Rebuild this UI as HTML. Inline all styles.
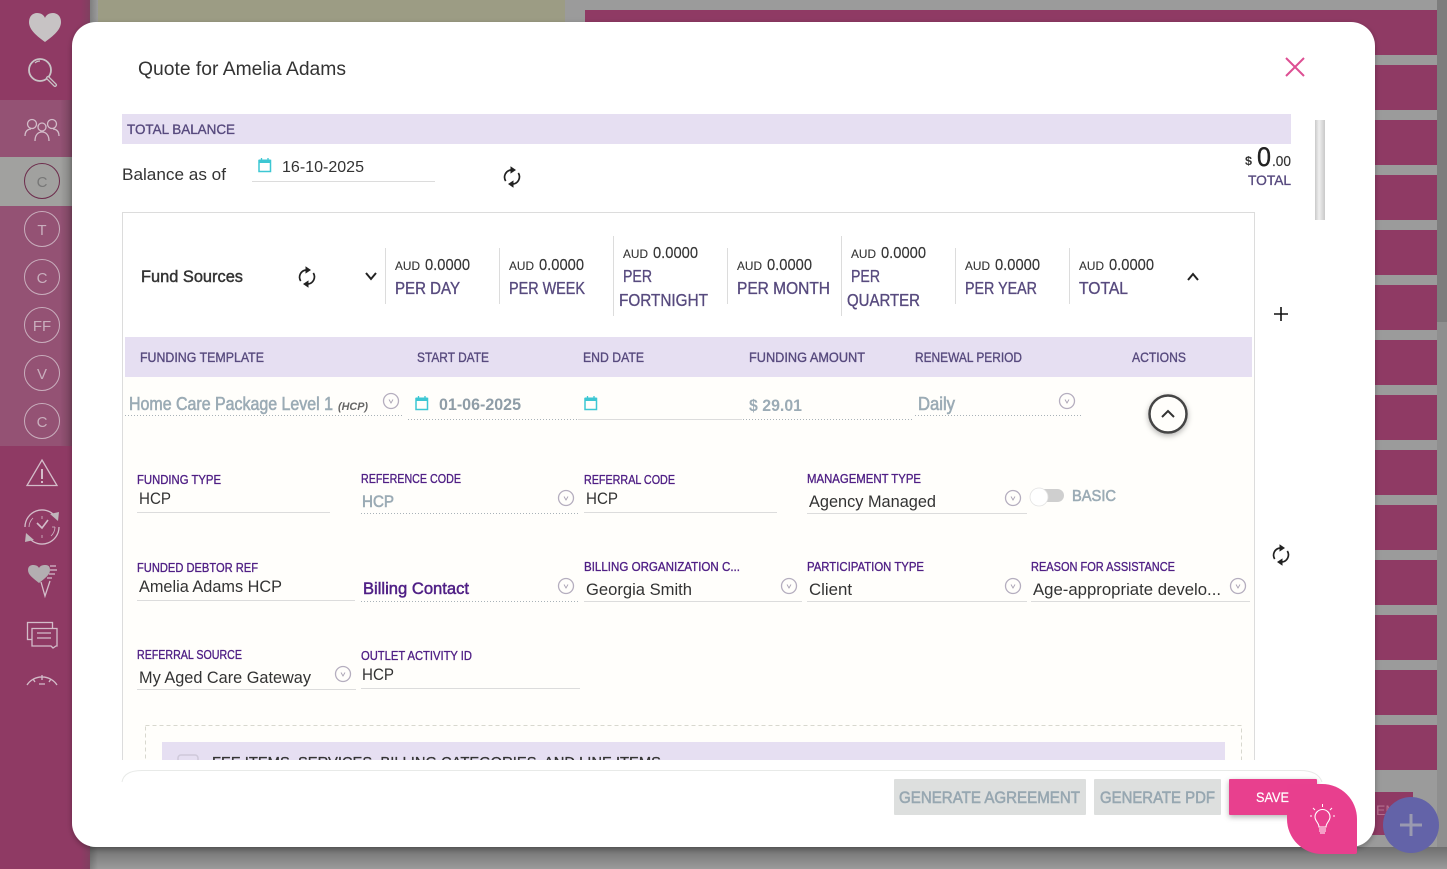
<!DOCTYPE html>
<html lang="en"><head><meta charset="utf-8"><title>Quote for Amelia Adams</title>
<style>
html,body{margin:0;padding:0;width:1447px;height:869px;overflow:hidden;background:#9b9b9b}
svg{display:block;position:absolute;left:0;top:0;overflow:hidden}
text{font-family:"Liberation Sans",sans-serif;white-space:pre}
.d{fill:#333}
.l{fill:#4f1f85;stroke:#4f1f85;stroke-width:.35;font-size:13px}
.g{fill:#9babb5;stroke:#9babb5;stroke-width:.6}
.v{fill:#333;font-size:17px}
.h{fill:#574a7e;stroke:#574a7e;stroke-width:.35;font-size:14px}
.a{fill:#333;font-size:12px;stroke:#333;stroke-width:.1}
.n{fill:#333;font-size:16px;stroke:#333;stroke-width:.15}
.t{fill:#574a7e;stroke:#574a7e;stroke-width:.35;font-size:17.5px}
.c{fill:#c9aebd;font-size:15px;text-anchor:middle}
.ln{stroke:#dcdcdc;stroke-width:1;fill:none}
.dt{stroke:#a9b2b8;stroke-width:1;stroke-dasharray:1 2;fill:none}
.si{fill:none;stroke:#d3bcc9;stroke-width:1.3}
</style></head><body>
<svg width="1447" height="869" viewBox="0 0 1447 869" xmlns="http://www.w3.org/2000/svg">
<defs>
<linearGradient id="side" x1="0" x2="1" y1="0" y2="0"><stop offset="0" stop-color="#8f3a64"/><stop offset=".9" stop-color="#8f3a64"/><stop offset="1" stop-color="#7f4060"/></linearGradient>
<linearGradient id="edge" x1="0" x2="1" y1="0" y2="0"><stop offset="0" stop-color="#000" stop-opacity="0"/><stop offset="1" stop-color="#000" stop-opacity=".18"/></linearGradient>
<linearGradient id="bot" x1="0" x2="0" y1="0" y2="1"><stop offset="0" stop-color="#6f6f6f"/><stop offset="1" stop-color="#9b9b9b"/></linearGradient>
<linearGradient id="sb" x1="0" x2="1" y1="0" y2="0"><stop offset="0" stop-color="#c9c9c9"/><stop offset=".4" stop-color="#efefef"/><stop offset="1" stop-color="#c9c9c9"/></linearGradient>
<filter id="sh" x="-20%" y="-20%" width="140%" height="150%"><feDropShadow dx="0" dy="2" stdDeviation="3" flood-color="#000" flood-opacity=".3"/></filter>
<g id="sync" fill="none" stroke="#222" stroke-width="1.7">
<path d="M-6.300 4A7.200 7.200 0 0 1 -1 -7"/><path d="M6.300 -4A7.200 7.200 0 0 1 1 7"/>
<path d="M-1.500 -10.800L4 -7L-1.500 -3.400Z" fill="#222" stroke="none"/><path d="M1.500 10.800L-4 7L1.500 3.400Z" fill="#222" stroke="none"/>
</g>
<g id="cv"><circle r="7.5" fill="none" stroke="#b5aebf" stroke-width="1.3"/><path d="M-2 -1.5L0 2L2 -1.5" fill="none" stroke="#a9a2b3" stroke-width=".9"/></g>
<g id="cal" fill="none" stroke="#3dc7d3"><rect x="1" y="2.5" width="11.5" height="11" stroke-width="1.5"/><rect x="1" y="1.5" width="11.5" height="3.5" fill="#3dc7d3" stroke="none"/><path d="M3.5 0V2M10 0V2" stroke-width="1.3"/></g>
<clipPath id="body"><rect x="72" y="22" width="1303" height="738"/></clipPath>
</defs>

<!-- page background -->
<rect width="1447" height="869" fill="#9b9b9b"/>
<rect x="98" y="0" width="467" height="22" fill="#9c9c84"/>
<g fill="#8f3a64">
<rect x="585" y="10" width="852" height="45"/><rect x="585" y="65" width="852" height="45"/><rect x="585" y="120" width="852" height="45"/><rect x="585" y="175" width="852" height="45"/><rect x="585" y="230" width="852" height="45"/><rect x="585" y="285" width="852" height="45"/><rect x="585" y="340" width="852" height="45"/><rect x="585" y="395" width="852" height="45"/><rect x="585" y="450" width="852" height="45"/><rect x="585" y="505" width="852" height="45"/><rect x="585" y="560" width="852" height="45"/><rect x="585" y="615" width="852" height="45"/><rect x="585" y="670" width="852" height="45"/><rect x="585" y="725" width="852" height="45"/>
<rect x="1370" y="792" width="43" height="43"/>
</g>
<text x="1376" y="815" font-size="14" fill="#b5708f">EM</text>
<rect x="1437" y="0" width="10" height="869" fill="#8f8f8f"/>
<rect x="1437" y="0" width="10" height="322" fill="#7d7d7d"/>

<!-- bottom shadow -->
<rect x="90" y="847" width="1357" height="22" fill="url(#bot)"/>

<!-- sidebar -->
<rect x="0" y="0" width="90" height="869" fill="url(#side)"/>
<rect x="90" y="0" width="8" height="869" fill="url(#edge)" transform="matrix(-1 0 0 1 188 0)"/>
<rect x="0" y="100" width="72" height="57" fill="#945274"/>
<rect x="0" y="157" width="72" height="49" fill="#a1a19f"/>
<rect x="0" y="206" width="72" height="240" fill="#945274"/>
<rect x="60" y="100" width="12" height="346" fill="url(#edge)"/>

<path d="M45 42C37 36 29 30 29 22C29 16 33 13 37 13C41 13 44 15 45 18C46 15 49 13 53 13C57 13 61 16 61 22C61 30 53 36 45 42Z" fill="#c7c3c4"/>
<g fill="none" stroke="#c9c3c6"><circle cx="40" cy="70" r="11" stroke-width="1.8"/><path d="M48 78L55 85" stroke-width="4" stroke-linecap="round"/><path d="M48 78L55 85" stroke="#8f3a64" stroke-width="1.4" stroke-linecap="round"/><path d="M35 63Q37 61 40 61" stroke-width="1.2"/></g>

<g class="si"><circle cx="32" cy="124" r="4.5"/><circle cx="42" cy="127" r="4"/><circle cx="52" cy="124" r="4.5"/><path d="M25 136C25 131 28 129 31 129M59 136C59 131 56 129 53 129M35 141C35 135 38 132 42 132C46 132 49 135 49 141"/></g>
<g fill="none" stroke="#c9aebd" stroke-width="1"><circle cx="42" cy="181" r="17.5" stroke="#6d2c4c"/><circle cx="42" cy="229" r="17.5"/><circle cx="42" cy="277" r="17.5"/><circle cx="42" cy="325" r="17.5"/><circle cx="42" cy="373" r="17.5"/><circle cx="42" cy="421" r="17.5"/></g>
<text class="c" x="42" y="187" style="fill:#777">C</text><text class="c" x="42" y="235">T</text><text class="c" x="42" y="283">C</text><text class="c" x="42" y="331">FF</text><text class="c" x="42" y="379">V</text><text class="c" x="42" y="427">C</text>

<g class="si"><path d="M42 460L57 485.500H27Z"/><path d="M42 469V479" stroke-width="2"/><path d="M42 481V483" stroke-width="2"/></g>
<g class="si"><path d="M25 527A17 17 0 0 1 55 516M59 527A17 17 0 0 1 29 538"/><path d="M29 527A13 13 0 0 1 33 518M55 527A13 13 0 0 1 51 536" stroke-width=".8"/><path d="M42 516V519M42 535V538M52 527H55" stroke-width=".8"/><path d="M37 523L42 528L48 520" stroke-width="1.6"/></g>
<path d="M50 514L59 512L58 521Z" fill="#c0b6bb"/><path d="M34 540L25 542L26 533Z" fill="#c0b6bb"/>
<path d="M39 583C33 578 28 575 28 570C28 566 31 565 33 565C36 565 38 566 39 568C40 566 42 565 45 565C48 565 50 566 50 570C50 575 45 578 39 583Z" fill="#b3aeb1"/>
<g class="si" stroke-width="1.1"><path d="M50 566H56M50 570H57M49 574H55M47 578H52M41 582L45 596L50 581"/></g>
<g class="si"><rect x="27.500" y="622.500" width="25" height="17"/><path d="M32 628.500H57V646H56L53 648L51 646H32Z" fill="#8f3a64"/><path d="M37 633H51M37 638H51"/></g>
<g class="si"><path d="M27 685A18 18 0 0 1 57 685M42 675V680M33 679L35 682M51 679L49 682M39 684H45"/></g>

<!-- modal -->
<rect x="72" y="22" width="1303" height="825" rx="24" fill="#fff" filter="url(#sh)"/>

<text class="d" x="138" y="75" font-size="19" textLength="208" lengthAdjust="spacingAndGlyphs">Quote for Amelia Adams</text>
<path d="M1286 58L1304 76M1304 58L1286 76" stroke="#dd4f93" stroke-width="2" fill="none"/>

<rect x="122" y="114" width="1169" height="30" fill="#e6dff2"/>
<text class="h" x="127" y="134" textLength="108" lengthAdjust="spacingAndGlyphs">TOTAL BALANCE</text>
<text class="d" x="122" y="180" font-size="17" textLength="104" lengthAdjust="spacingAndGlyphs">Balance as of</text>
<use href="#cal" x="258" y="158"/>
<text class="d" x="282" y="172" font-size="16" textLength="82" lengthAdjust="spacingAndGlyphs">16-10-2025</text>
<path class="ln" d="M252 181.500H435"/>
<use href="#sync" x="512" y="177"/>

<text x="1245" y="165" font-size="12" font-weight="bold" fill="#333" textLength="7" lengthAdjust="spacingAndGlyphs">$</text>
<text x="1257" y="166" font-size="27" fill="#222" stroke="#222" stroke-width=".4" textLength="14" lengthAdjust="spacingAndGlyphs">0</text>
<text x="1272" y="166" font-size="15" fill="#333" stroke="#333" stroke-width=".15" textLength="19" lengthAdjust="spacingAndGlyphs">.00</text>
<text class="h" x="1248" y="185" textLength="43" lengthAdjust="spacingAndGlyphs">TOTAL</text>
<rect x="1315" y="120" width="10" height="100" fill="url(#sb)"/>

<g clip-path="url(#body)">
<rect x="122.500" y="212.500" width="1132" height="656" fill="#fff" stroke="#dcdcdc"/>
<rect x="123" y="377" width="1131" height="491" fill="#fffefb"/>

<text x="141" y="282" font-size="17" fill="#333" stroke="#333" stroke-width=".45" textLength="102" lengthAdjust="spacingAndGlyphs">Fund Sources</text>
<use href="#sync" x="307" y="277"/>
<path d="M366 273L371 279L376 273" fill="none" stroke="#222" stroke-width="2"/>
<path d="M1188 280L1193 274L1198 280" fill="none" stroke="#222" stroke-width="2"/>
<g class="ln"><path d="M385.500 248V304M499.500 248V304M613.500 236V316M727.500 248V304M841.500 236V316M955.500 248V304M1069.500 248V304"/></g>

<text class="a" x="395" y="270" textLength="25" lengthAdjust="spacingAndGlyphs">AUD</text><text class="n" x="425" y="270" textLength="45" lengthAdjust="spacingAndGlyphs">0.0000</text>
<text class="t" x="395" y="294" textLength="65" lengthAdjust="spacingAndGlyphs">PER DAY</text>
<text class="a" x="509" y="270" textLength="25" lengthAdjust="spacingAndGlyphs">AUD</text><text class="n" x="539" y="270" textLength="45" lengthAdjust="spacingAndGlyphs">0.0000</text>
<text class="t" x="509" y="294" textLength="76" lengthAdjust="spacingAndGlyphs">PER WEEK</text>
<text class="a" x="623" y="258" textLength="25" lengthAdjust="spacingAndGlyphs">AUD</text><text class="n" x="653" y="258" textLength="45" lengthAdjust="spacingAndGlyphs">0.0000</text>
<text class="t" x="623" y="282" textLength="29" lengthAdjust="spacingAndGlyphs">PER</text>
<text class="t" x="619" y="306" textLength="89" lengthAdjust="spacingAndGlyphs">FORTNIGHT</text>
<text class="a" x="737" y="270" textLength="25" lengthAdjust="spacingAndGlyphs">AUD</text><text class="n" x="767" y="270" textLength="45" lengthAdjust="spacingAndGlyphs">0.0000</text>
<text class="t" x="737" y="294" textLength="93" lengthAdjust="spacingAndGlyphs">PER MONTH</text>
<text class="a" x="851" y="258" textLength="25" lengthAdjust="spacingAndGlyphs">AUD</text><text class="n" x="881" y="258" textLength="45" lengthAdjust="spacingAndGlyphs">0.0000</text>
<text class="t" x="851" y="282" textLength="29" lengthAdjust="spacingAndGlyphs">PER</text>
<text class="t" x="847" y="306" textLength="73" lengthAdjust="spacingAndGlyphs">QUARTER</text>
<text class="a" x="965" y="270" textLength="25" lengthAdjust="spacingAndGlyphs">AUD</text><text class="n" x="995" y="270" textLength="45" lengthAdjust="spacingAndGlyphs">0.0000</text>
<text class="t" x="965" y="294" textLength="72" lengthAdjust="spacingAndGlyphs">PER YEAR</text>
<text class="a" x="1079" y="270" textLength="25" lengthAdjust="spacingAndGlyphs">AUD</text><text class="n" x="1109" y="270" textLength="45" lengthAdjust="spacingAndGlyphs">0.0000</text>
<text class="t" x="1079" y="294" textLength="49" lengthAdjust="spacingAndGlyphs">TOTAL</text>

<rect x="125" y="337" width="1127" height="40" fill="#e6dff2"/>
<text class="h" x="140" y="362" textLength="124" lengthAdjust="spacingAndGlyphs">FUNDING TEMPLATE</text>
<text class="h" x="417" y="362" textLength="72" lengthAdjust="spacingAndGlyphs">START DATE</text>
<text class="h" x="583" y="362" textLength="61" lengthAdjust="spacingAndGlyphs">END DATE</text>
<text class="h" x="749" y="362" textLength="116" lengthAdjust="spacingAndGlyphs">FUNDING AMOUNT</text>
<text class="h" x="915" y="362" textLength="107" lengthAdjust="spacingAndGlyphs">RENEWAL PERIOD</text>
<text class="h" x="1132" y="362" textLength="54" lengthAdjust="spacingAndGlyphs">ACTIONS</text>

<text class="g" x="129" y="410" font-size="18" textLength="204" lengthAdjust="spacingAndGlyphs">Home Care Package Level 1</text>
<text x="338" y="410" font-size="11" font-style="italic" font-weight="bold" fill="#666" textLength="30" lengthAdjust="spacingAndGlyphs">(HCP)</text>
<use href="#cv" x="391" y="401"/>
<path class="dt" d="M125 415.500H403"/>
<use href="#cal" x="415" y="396"/>
<text x="439" y="410" font-size="17" font-weight="bold" fill="#8f9da7" textLength="82" lengthAdjust="spacingAndGlyphs">01-06-2025</text>
<path class="dt" d="M408 419.500H577"/>
<use href="#cal" x="584" y="396"/>
<path class="ln" d="M578 419.500H742"/>
<text x="749" y="411" font-size="17" font-weight="bold" fill="#9babb5" textLength="53" lengthAdjust="spacingAndGlyphs">$ 29.01</text>
<path class="dt" d="M743 419.500H912"/>
<text class="g" x="918" y="410" font-size="18" textLength="37" lengthAdjust="spacingAndGlyphs">Daily</text>
<use href="#cv" x="1067" y="401"/>
<path class="dt" d="M915 415.500H1082"/>
<circle cx="1168" cy="414" r="18.500" fill="#fffefb" stroke="#444" stroke-width="2.500" filter="url(#sh)"/>
<path d="M1162 417L1168 411L1174 417" fill="none" stroke="#333" stroke-width="2"/>

<text class="l" x="137" y="484" textLength="84" lengthAdjust="spacingAndGlyphs">FUNDING TYPE</text>
<text class="v" x="139" y="504" textLength="32" lengthAdjust="spacingAndGlyphs">HCP</text>
<path class="ln" d="M137 512.500H330"/>
<text class="l" x="361" y="483" textLength="100" lengthAdjust="spacingAndGlyphs">REFERENCE CODE</text>
<text class="g" x="362" y="507" font-size="17" textLength="32" lengthAdjust="spacingAndGlyphs">HCP</text>
<use href="#cv" x="566" y="498"/>
<path class="dt" d="M361 513.500H580"/>
<text class="l" x="584" y="484" textLength="91" lengthAdjust="spacingAndGlyphs">REFERRAL CODE</text>
<text class="v" x="586" y="504" textLength="32" lengthAdjust="spacingAndGlyphs">HCP</text>
<path class="ln" d="M584 512.500H777"/>
<text class="l" x="807" y="483" textLength="114" lengthAdjust="spacingAndGlyphs">MANAGEMENT TYPE</text>
<text class="v" x="809" y="507" textLength="127" lengthAdjust="spacingAndGlyphs">Agency Managed</text>
<use href="#cv" x="1013" y="498"/>
<path class="ln" d="M807 513.500H1027"/>
<rect x="1035" y="489" width="29" height="13" rx="6.500" fill="#cfcfcf"/>
<circle cx="1039" cy="497" r="9" fill="#fff" stroke="#e2e2e2" stroke-width=".8"/>
<text class="g" x="1072" y="501" font-size="16" textLength="44" lengthAdjust="spacingAndGlyphs">BASIC</text>

<text class="l" x="137" y="572" textLength="121" lengthAdjust="spacingAndGlyphs">FUNDED DEBTOR REF</text>
<text class="v" x="139" y="592" textLength="143" lengthAdjust="spacingAndGlyphs">Amelia Adams HCP</text>
<path class="ln" d="M137 600.500H355"/>
<text x="363" y="594" font-size="17" fill="#4f1f85" stroke="#4f1f85" stroke-width=".5" textLength="106" lengthAdjust="spacingAndGlyphs">Billing Contact</text>
<use href="#cv" x="566" y="586"/>
<path class="dt" d="M361 601.500H580"/>
<text class="l" x="584" y="571" textLength="156" lengthAdjust="spacingAndGlyphs">BILLING ORGANIZATION C...</text>
<text class="v" x="586" y="595" textLength="106" lengthAdjust="spacingAndGlyphs">Georgia Smith</text>
<use href="#cv" x="789" y="586"/>
<path class="ln" d="M584 601.500H802"/>
<text class="l" x="807" y="571" textLength="117" lengthAdjust="spacingAndGlyphs">PARTICIPATION TYPE</text>
<text class="v" x="809" y="595" textLength="43" lengthAdjust="spacingAndGlyphs">Client</text>
<use href="#cv" x="1013" y="586"/>
<path class="ln" d="M807 601.500H1027"/>
<text class="l" x="1031" y="571" textLength="144" lengthAdjust="spacingAndGlyphs">REASON FOR ASSISTANCE</text>
<text class="v" x="1033" y="595" textLength="188" lengthAdjust="spacingAndGlyphs">Age-appropriate develo...</text>
<use href="#cv" x="1238" y="586"/>
<path class="ln" d="M1031 601.500H1250"/>

<text class="l" x="137" y="659" textLength="105" lengthAdjust="spacingAndGlyphs">REFERRAL SOURCE</text>
<text class="v" x="139" y="683" textLength="172" lengthAdjust="spacingAndGlyphs">My Aged Care Gateway</text>
<use href="#cv" x="343" y="674"/>
<path class="ln" d="M137 689.500H356"/>
<text class="l" x="361" y="660" textLength="111" lengthAdjust="spacingAndGlyphs">OUTLET ACTIVITY ID</text>
<text class="v" x="362" y="680" textLength="32" lengthAdjust="spacingAndGlyphs">HCP</text>
<path class="ln" d="M361 688.500H580"/>

<rect x="145.500" y="725.500" width="1096" height="100" fill="none" stroke="#d8d8cf" stroke-dasharray="4 3"/>
<rect x="162" y="742" width="1063" height="60" fill="#e6dff2"/>
<rect x="178" y="755" width="20" height="20" rx="3" fill="none" stroke="#cfc9da" stroke-width="1.500"/>
<text x="212" y="767" font-size="15" fill="#333" stroke="#333" stroke-width=".3" textLength="449" lengthAdjust="spacingAndGlyphs">FEE ITEMS, SERVICES, BILLING CATEGORIES, AND LINE ITEMS</text>
</g>

<use href="#sync" x="1281" y="555"/>
<path d="M1281 307V321M1274 314H1288" stroke="#111" stroke-width="1.600" fill="none"/>

<!-- footer -->
<path d="M122 782Q124 770.500 142 770.500H1300Q1318 770.500 1322 782" fill="none" stroke="#e8eae8"/>
<rect x="894" y="779" width="192" height="36" rx="1" fill="#dddfde"/>
<text x="899" y="803" font-size="17" fill="#97a7b1" stroke="#97a7b1" stroke-width=".6" textLength="181" lengthAdjust="spacingAndGlyphs">GENERATE AGREEMENT</text>
<rect x="1094" y="779" width="127" height="36" rx="1" fill="#dddfde"/>
<text x="1100" y="803" font-size="17" fill="#97a7b1" stroke="#97a7b1" stroke-width=".6" textLength="115" lengthAdjust="spacingAndGlyphs">GENERATE PDF</text>
<rect x="1229" y="779" width="88" height="36" rx="1" fill="#e83f8e" filter="url(#sh)"/>
<path d="M1289 784H1322A35 35 0 0 1 1357 819V852Q1357 854 1355 854H1322A35 35 0 0 1 1287 819V786Z" fill="#e83f8e"/>
<text x="1256" y="802" font-size="14" fill="#fff" stroke="#fff" stroke-width=".2" textLength="33" lengthAdjust="spacingAndGlyphs">SAVE</text>
<g fill="none" stroke="#fff" stroke-width="1.100"><path d="M1319 827C1319 823 1315 821 1315 817A7.500 7.500 0 0 1 1330 817C1330 821 1326 823 1326 827Z"/><path d="M1319 829H1326M1319 831H1326M1320 833H1325"/><path d="M1322.500 807V804M1315 810L1313 808M1330 810L1332 808M1312 816H1310M1333 816H1335" stroke-width="1"/></g>

<circle cx="1411" cy="825" r="28" fill="#6363a8"/>
<path d="M1411 814V836M1400 825H1422" stroke="#9a9ab0" stroke-width="3" fill="none"/>
</svg>
</body></html>
